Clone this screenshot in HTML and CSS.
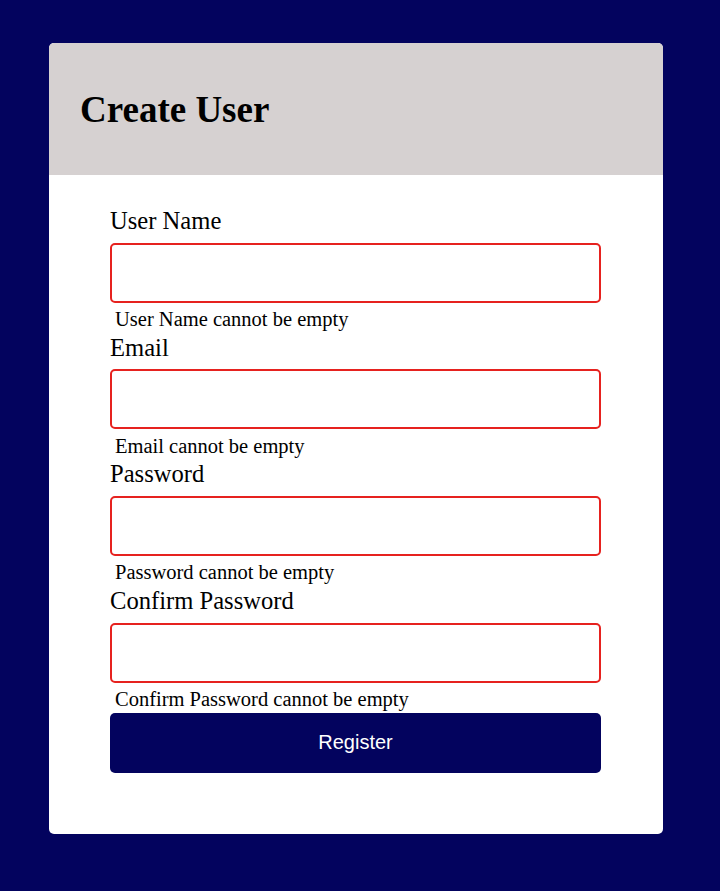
FILE: index.html
```html
<!DOCTYPE html>
<html>
<head>
<meta charset="utf-8">
<link rel="stylesheet" href="styles.css">
</head>
<body>
<div class="card">
  <div class="card-header"><h1 class="title">Create User</h1></div>
  <form class="form">
    <div class="field">
      <label class="label">User Name</label>
      <input class="input" type="text">
      <div class="error">User Name cannot be empty</div>
    </div>
    <div class="field">
      <label class="label">Email</label>
      <input class="input" type="text">
      <div class="error">Email cannot be empty</div>
    </div>
    <div class="field">
      <label class="label">Password</label>
      <input class="input" type="password">
      <div class="error">Password cannot be empty</div>
    </div>
    <div class="field">
      <label class="label">Confirm Password</label>
      <input class="input" type="password">
      <div class="error">Confirm Password cannot be empty</div>
    </div>
    <button class="btn" type="button">Register</button>
  </form>
</div>
</body>
</html>
```
FILE: styles.css
```css
html, body { margin: 0; padding: 0; }
body {
  background: #03035e;
  font-family: "Liberation Serif", "Times New Roman", serif;
  padding: 43px 57px 56px 49px;
}
.card {
  width: 614px;
  background: #fff;
  border-radius: 5px;
  overflow: hidden;
}
.card-header {
  background: #d6d1d1;
  height: 132px;
  display: flex;
  align-items: center;
  padding-left: 31px;
}
.title {
  margin: 0;
  font-size: 37px;
  font-weight: bold;
  color: #000;
}
.form {
  padding: 30px 62px 61px 61px;
  display: flex;
  flex-direction: column;
}
.field { display: flex; flex-direction: column; }
.label {
  font-size: 24.6px;
  line-height: 28px;
  color: #000;
  padding-top: 2px;
  margin-bottom: 7.67px;
}
.input {
  box-sizing: border-box;
  height: 60px;
  width: 100%;
  border: 2px solid #e6221f;
  border-radius: 5px;
  margin: 0;
  background: #fff;
}
.error {
  font-size: 20.5px;
  line-height: 23px;
  padding-left: 5px;
  margin-top: 5.5px;
  margin-bottom: 0.5px;
}
.btn {
  margin-top: 1px;
  height: 60px;
  width: 100%;
  border: none;
  border-radius: 5px;
  background: #03035e;
  color: #fff;
  font-family: "Liberation Sans", Arial, sans-serif;
  font-size: 20px;
}
```
